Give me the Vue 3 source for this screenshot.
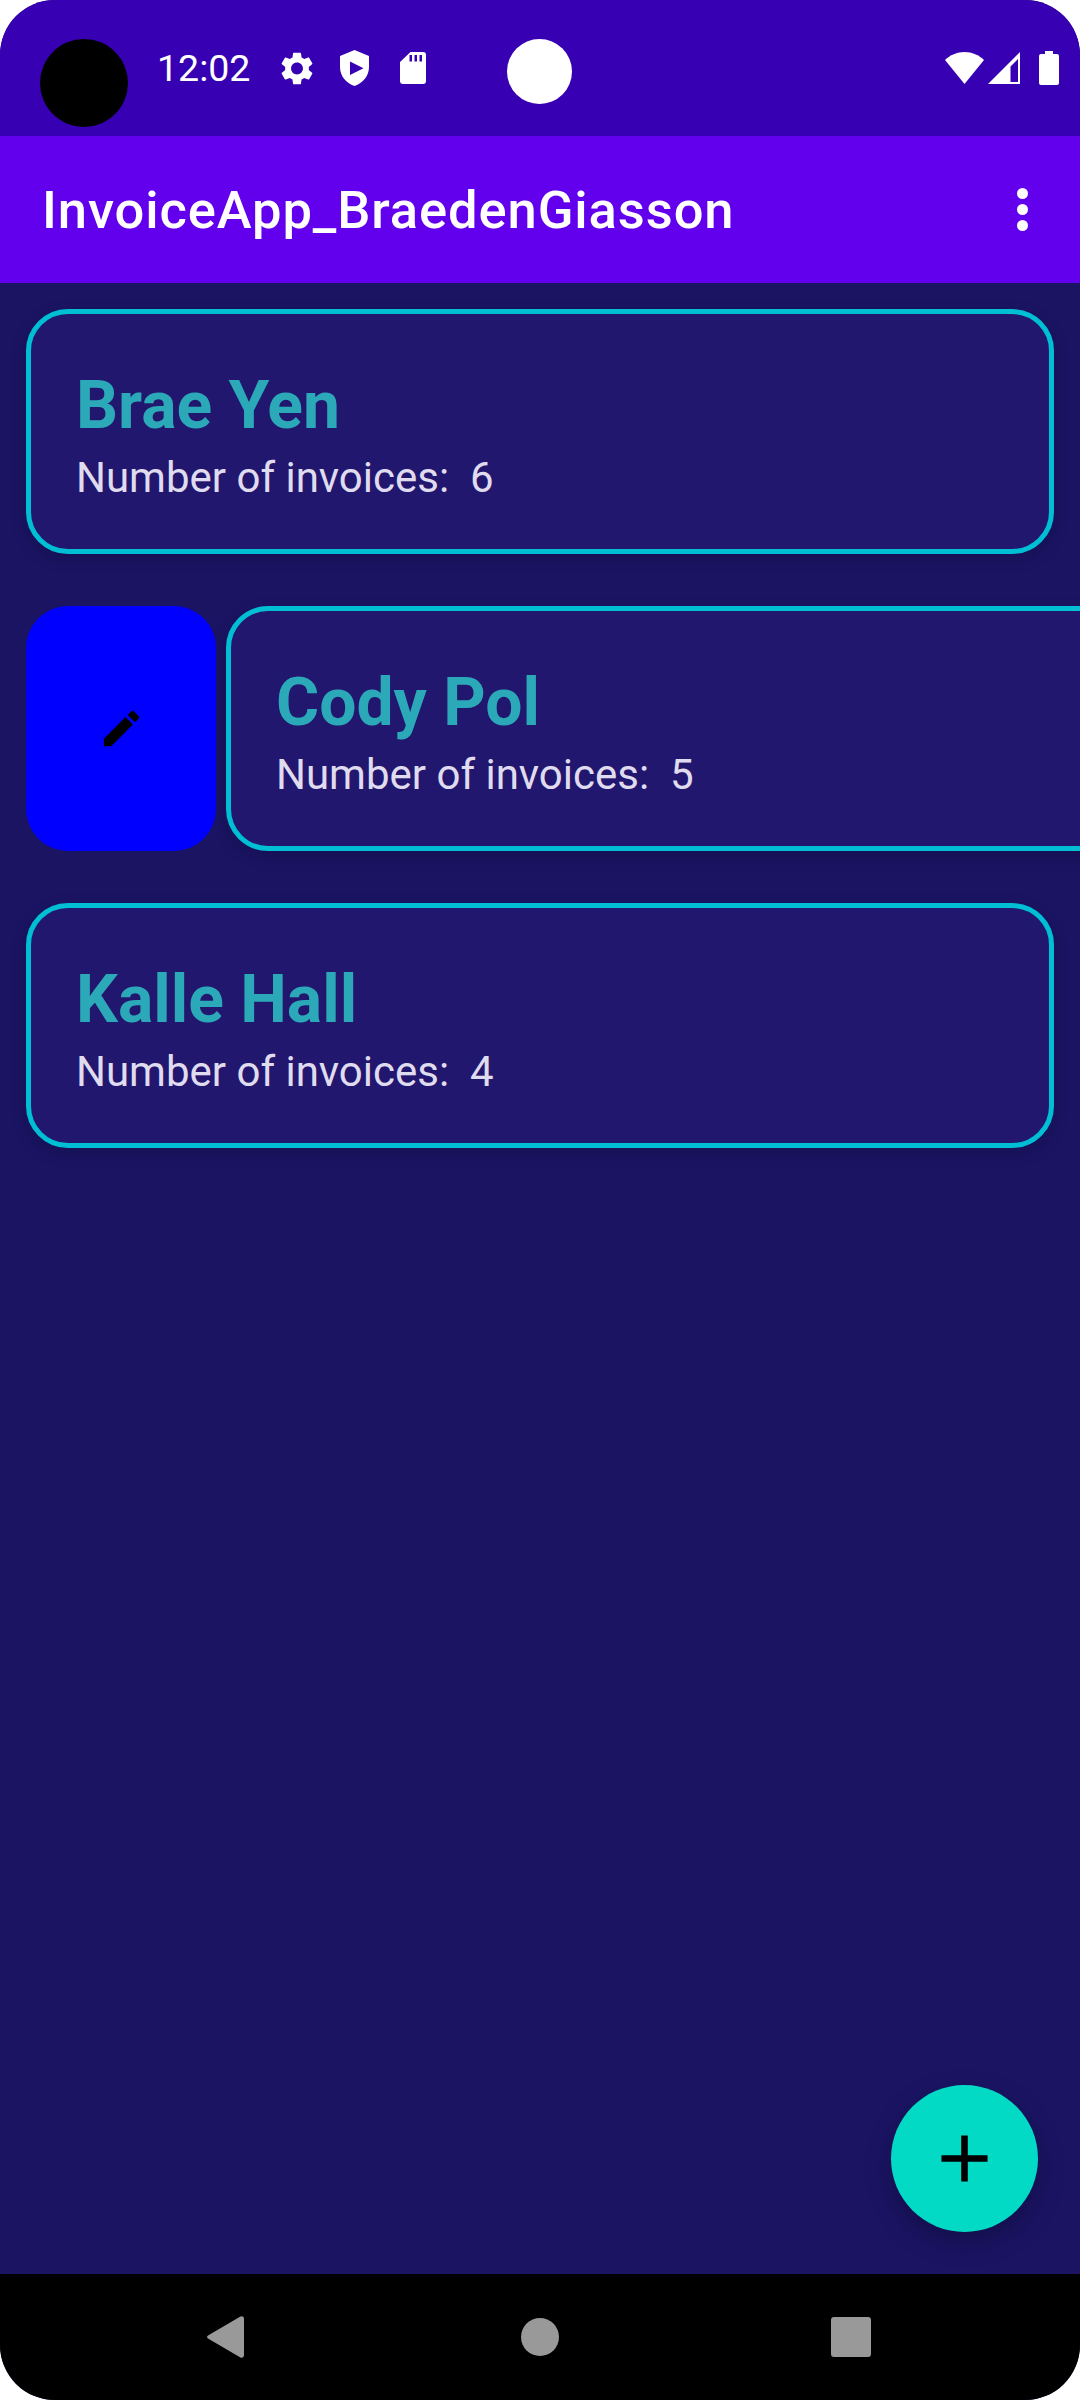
<script setup>
const customers = [
  { name: "Brae Yen", invoices: 6 },
  { name: "Cody Pol", invoices: 5, swiped: true },
  { name: "Kalle Hall", invoices: 4 },
];
</script>

<template>
  <div class="phone">
    <header class="status-bar">
      <span class="camera"></span>
      <span class="time">12:02</span>
      <svg class="ic-gear" viewBox="2.6 2 18.8 20" fill="#fff">
        <path d="M19.14 12.94c.04-.3.06-.61.06-.94 0-.32-.02-.64-.07-.94l2.03-1.58c.18-.14.23-.41.12-.61l-1.92-3.32c-.12-.22-.37-.29-.59-.22l-2.39.96c-.5-.38-1.03-.7-1.62-.94l-.36-2.54c-.04-.24-.24-.41-.48-.41h-3.84c-.24 0-.43.17-.47.41l-.36 2.54c-.59.24-1.13.57-1.62.94l-2.39-.96c-.22-.08-.47 0-.59.22L2.74 8.87c-.12.21-.08.47.12.61l2.03 1.58c-.05.3-.09.63-.09.94s.02.64.07.94l-2.03 1.58c-.18.14-.23.41-.12.61l1.92 3.32c.12.22.37.29.59.22l2.39-.96c.5.38 1.03.7 1.62.94l.36 2.54c.05.24.24.41.48.41h3.84c.24 0 .44-.17.47-.41l.36-2.54c.59-.24 1.13-.56 1.62-.94l2.39.96c.22.08.47 0 .59-.22l1.92-3.32c.12-.22.07-.47-.12-.61l-2.01-1.58zM12 15.6c-1.98 0-3.6-1.62-3.6-3.6s1.62-3.6 3.6-3.6 3.6 1.62 3.6 3.6-1.62 3.6-3.6 3.6z" />
      </svg>
      <svg class="ic-shield" viewBox="0 0 29 36" fill="#fff" fill-rule="evenodd">
        <path d="M14.5 0L29 6V17C29 26 23 33 14.5 36C6 33 0 26 0 17V6ZM10 11.5V25L23.5 18.2Z" />
      </svg>
      <svg class="ic-sd" viewBox="0 0 26 32" fill="#fff" fill-rule="evenodd">
        <path d="M10.5 0H23a3 3 0 0 1 3 3V29a3 3 0 0 1-3 3H3a3 3 0 0 1-3-3V10ZM9.5 3V9.5H12V3ZM14.5 3V9.5H17V3ZM19.5 3V9.5H22V3Z" />
      </svg>
      <span class="notch"></span>
      <div class="status-right">
        <svg class="ic-wifi" viewBox="0 0 39 32" fill="#fff">
          <path d="M0 8C5 3 12 0 19.5 0C27 0 34 3 39 8L19.5 32Z" />
        </svg>
        <svg class="ic-signal" viewBox="0 0 32 32" fill="#fff" fill-rule="evenodd">
          <path d="M32 0V32H0ZM30 7L22.5 14.5V30H30Z" />
        </svg>
        <svg class="ic-battery" viewBox="0 0 20 34" fill="#fff">
          <path d="M6 0H14V3H18a2 2 0 0 1 2 2V32a2 2 0 0 1-2 2H2a2 2 0 0 1-2-2V5a2 2 0 0 1 2-2H6Z" />
        </svg>
      </div>
    </header>

    <div class="app-bar">
      <h1>InvoiceApp_BraedenGiasson</h1>
      <div class="menu">
        <span></span>
        <span></span>
        <span></span>
      </div>
    </div>

    <main class="list">
      <div v-for="c in customers" :key="c.name" class="row">
        <div v-if="c.swiped" class="edit">
          <svg width="47" height="47" viewBox="0 0 24 24" fill="#000">
            <path d="M3 17.25V21h3.75L17.81 9.94l-3.75-3.75L3 17.25zM20.71 7.04c.39-.39.39-1.02 0-1.41l-2.34-2.34c-.39-.39-1.02-.39-1.41 0l-1.83 1.83 3.75 3.75 1.83-1.83z" />
          </svg>
        </div>
        <div class="card">
          <div class="name">{{ c.name }}</div>
          <div class="count">{{ "Number of invoices:  " + c.invoices }}</div>
        </div>
      </div>

      <button class="fab">
        <svg width="79" height="79" viewBox="0 0 24 24" fill="#000">
          <path d="M19 13h-6v6h-2v-6H5v-2h6V5h2v6h6v2z" />
        </svg>
      </button>
    </main>

    <nav class="nav-bar">
      <svg class="ic-back" viewBox="0 0 37 42" fill="#999">
        <path d="M1 19.5L33 .8C35 -.5 37 .5 37 3V39C37 41.5 35 42.5 33 41.2L1 22.5C-.3 21.6 -.3 20.4 1 19.5Z" />
      </svg>
      <span class="home"></span>
      <span class="recents"></span>
    </nav>
  </div>
</template>

<style>
html,
body {
  margin: 0;
  background: #fff;
}
</style>

<style scoped>
.phone {
  width: 1080px;
  height: 2400px;
  display: flex;
  flex-direction: column;
  overflow: hidden;
  border-radius: 55px;
  background: #1a1463;
  font-family: Roboto, sans-serif;
}

.status-bar {
  position: relative;
  flex: none;
  height: 136px;
  box-sizing: border-box;
  padding: 0 21px 0 157px;
  display: flex;
  align-items: center;
  background: #3700b3;
  color: #fff;
}

.camera {
  position: absolute;
  left: 40px;
  top: 39px;
  width: 88px;
  height: 88px;
  border-radius: 50%;
  background: #000;
}

.notch {
  position: absolute;
  left: 507px;
  top: 39px;
  width: 65px;
  height: 65px;
  border-radius: 50%;
  background: #fff;
}

.time {
  font-size: 37.5px;
  width: 124px;
}

.ic-gear {
  width: 32px;
  height: 33px;
}

.ic-shield {
  width: 29px;
  height: 36px;
  margin-left: 27px;
}

.ic-sd {
  width: 26px;
  height: 32px;
  margin-left: 31px;
}

.status-right {
  margin-left: auto;
  display: flex;
  align-items: center;
}

.ic-wifi {
  width: 39px;
  height: 32px;
}

.ic-signal {
  width: 32px;
  height: 32px;
  margin-left: 4px;
}

.ic-battery {
  width: 20px;
  height: 34px;
  margin-left: 19px;
}

.app-bar {
  flex: none;
  height: 147px;
  box-sizing: border-box;
  padding: 0 52px 0 42px;
  display: flex;
  align-items: center;
  justify-content: space-between;
  background: #6200ee;
  color: #fff;
}

.app-bar h1 {
  margin: 0;
  font-size: 52.5px;
  font-weight: 500;
  letter-spacing: 0.9px;
}

.menu {
  display: flex;
  flex-direction: column;
  gap: 5px;
}

.menu span {
  width: 11px;
  height: 11px;
  border-radius: 50%;
  background: #fff;
}

.list {
  position: relative;
  flex: 1;
  padding-top: 26px;
  display: flex;
  flex-direction: column;
  gap: 52px;
  overflow: hidden;
}

.row {
  display: flex;
  gap: 10px;
  padding-left: 26px;
}

.edit {
  flex: none;
  width: 190px;
  border-radius: 42px;
  background: #00f;
  display: flex;
  align-items: center;
  justify-content: center;
}

.card {
  flex: none;
  width: 1028px;
  height: 245px;
  box-sizing: border-box;
  padding: 6px 45px 0;
  display: flex;
  flex-direction: column;
  justify-content: center;
  border: 5px solid #00bfd4;
  border-radius: 42px;
  background: #22176e;
  box-shadow: 0 5px 16px rgba(0, 0, 0, 0.18);
}

.name {
  font-size: 66px;
  font-weight: 700;
  line-height: 78px;
  color: #2ca9b8;
}

.count {
  margin-top: 8px;
  font-size: 42px;
  line-height: 49px;
  color: #e0dcf0;
  white-space: pre;
}

.fab {
  position: absolute;
  right: 42px;
  bottom: 42px;
  width: 147px;
  height: 147px;
  padding: 0;
  border: none;
  border-radius: 50%;
  display: flex;
  align-items: center;
  justify-content: center;
  background: #03dac5;
  box-shadow: 0 10px 26px rgba(0, 0, 0, 0.25);
}

.nav-bar {
  flex: none;
  height: 126px;
  box-sizing: border-box;
  padding-left: 207px;
  display: flex;
  align-items: center;
  background: #000;
}

.ic-back {
  width: 37px;
  height: 42px;
}

.home {
  width: 38px;
  height: 38px;
  margin-left: 277px;
  border-radius: 50%;
  background: #999;
}

.recents {
  width: 40px;
  height: 40px;
  margin-left: 272px;
  border-radius: 3px;
  background: #999;
}
</style>
